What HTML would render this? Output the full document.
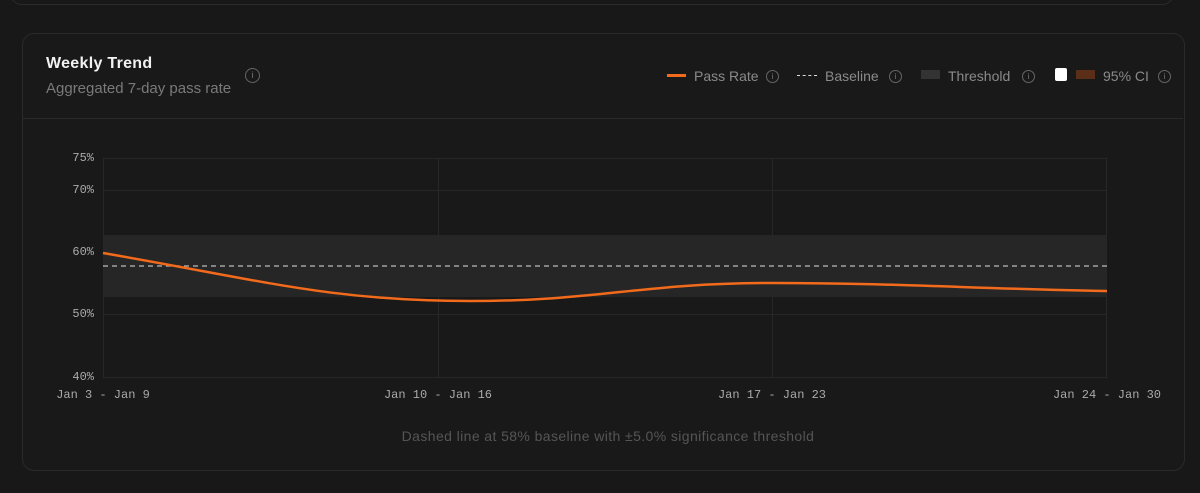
<!DOCTYPE html>
<html><head><style>
body{margin:0;width:1200px;height:493px;background:#181818;font-family:"Liberation Sans",sans-serif;overflow:hidden;position:relative}
.top{position:absolute;left:10px;top:-30px;width:1162px;height:33px;border:1px solid #2a2a2a;border-radius:12px}
.card{position:absolute;left:22px;top:33px;width:1161px;height:436px;border:1px solid #2a2a2a;border-radius:12px;background:#191919}
.t{position:absolute;left:46px;top:55px;color:#f2f2f2;font-weight:bold;font-size:16px;letter-spacing:0.3px}
.s{position:absolute;left:46px;top:80px;color:#7a7a7a;font-size:15px}
.info{position:absolute;width:11px;height:11px;border:1px solid #666;border-radius:50%;color:#777;font-size:8px;text-align:center;line-height:11px}
.leg{position:absolute;top:68px;color:#8a8a8a;font-size:14px}
.mono{font-family:"Liberation Mono",monospace;font-size:12px;color:#aaa;position:absolute}
.foot{position:absolute;top:428px;width:1200px;text-align:center;color:#555;font-size:14px;letter-spacing:0.4px}
</style></head><body>
<div class="top"></div>
<div class="card"></div>
<div class="t">Weekly Trend</div>
<div class="s">Aggregated 7-day pass rate</div>
<div class="info" style="left:245px;top:68px;width:13px;height:13px;line-height:13px;font-size:9px">i</div>
<div style="position:absolute;left:23px;top:118px;width:1160px;height:1px;background:#2a2a2a"></div>
<div style="position:absolute;left:667px;top:74px;width:19px;height:3px;background:#f26a1b"></div>
<div class="leg" style="left:694px">Pass Rate</div><div class="info" style="left:766px;top:70px">i</div>
<div style="position:absolute;left:797px;top:75px;width:20px;border-top:1px dashed #ddd"></div>
<div class="leg" style="left:825px">Baseline</div><div class="info" style="left:889px;top:70px">i</div>
<div style="position:absolute;left:921px;top:70px;width:19px;height:9px;background:#333"></div>
<div class="leg" style="left:948px">Threshold</div><div class="info" style="left:1022px;top:70px">i</div>
<div style="position:absolute;left:1055px;top:68px;width:12px;height:13px;background:#fff;border-radius:2px"></div>
<div style="position:absolute;left:1076px;top:70px;width:19px;height:9px;background:#5a2e17"></div>
<div class="leg" style="left:1103px">95% CI</div><div class="info" style="left:1158px;top:70px">i</div>
<svg style="position:absolute;left:0;top:0" width="1200" height="493">
<rect x="103" y="235" width="1004" height="62" fill="#262626"/>
<g stroke="#272727" stroke-width="1">
<line x1="103" y1="158.5" x2="1107" y2="158.5"/><line x1="103" y1="190.5" x2="1107" y2="190.5"/>
<line x1="103" y1="252.5" x2="1107" y2="252.5"/><line x1="103" y1="314.5" x2="1107" y2="314.5"/>
<line x1="103" y1="377.5" x2="1107" y2="377.5"/>
<line x1="103.5" y1="158" x2="103.5" y2="377"/><line x1="438.5" y1="158" x2="438.5" y2="377"/>
<line x1="772.5" y1="158" x2="772.5" y2="377"/><line x1="1106.5" y1="158" x2="1106.5" y2="377"/>
</g>
<line x1="103" y1="266" x2="1107" y2="266" stroke="#bbb" stroke-width="1.3" stroke-dasharray="5,4"/>
<path d="M103,253 C260,280 330,301 470,301 C600,301 640,283 772,283 C900,283 980,289 1107,291" fill="none" stroke="#f26a1b" stroke-width="2.5"/>
</svg>
<div class="mono" style="left:60px;top:151px;width:34px;text-align:right">75%</div>
<div class="mono" style="left:60px;top:183px;width:34px;text-align:right">70%</div>
<div class="mono" style="left:60px;top:245px;width:34px;text-align:right">60%</div>
<div class="mono" style="left:60px;top:307px;width:34px;text-align:right">50%</div>
<div class="mono" style="left:60px;top:370px;width:34px;text-align:right">40%</div>
<div class="mono" style="left:3px;top:388px;width:200px;text-align:center">Jan 3 - Jan 9</div>
<div class="mono" style="left:338px;top:388px;width:200px;text-align:center">Jan 10 - Jan 16</div>
<div class="mono" style="left:672px;top:388px;width:200px;text-align:center">Jan 17 - Jan 23</div>
<div class="mono" style="left:1007px;top:388px;width:200px;text-align:center">Jan 24 - Jan 30</div>
<div class="foot" style="left:8px">Dashed line at 58% baseline with ±5.0% significance threshold</div>
</body></html>
